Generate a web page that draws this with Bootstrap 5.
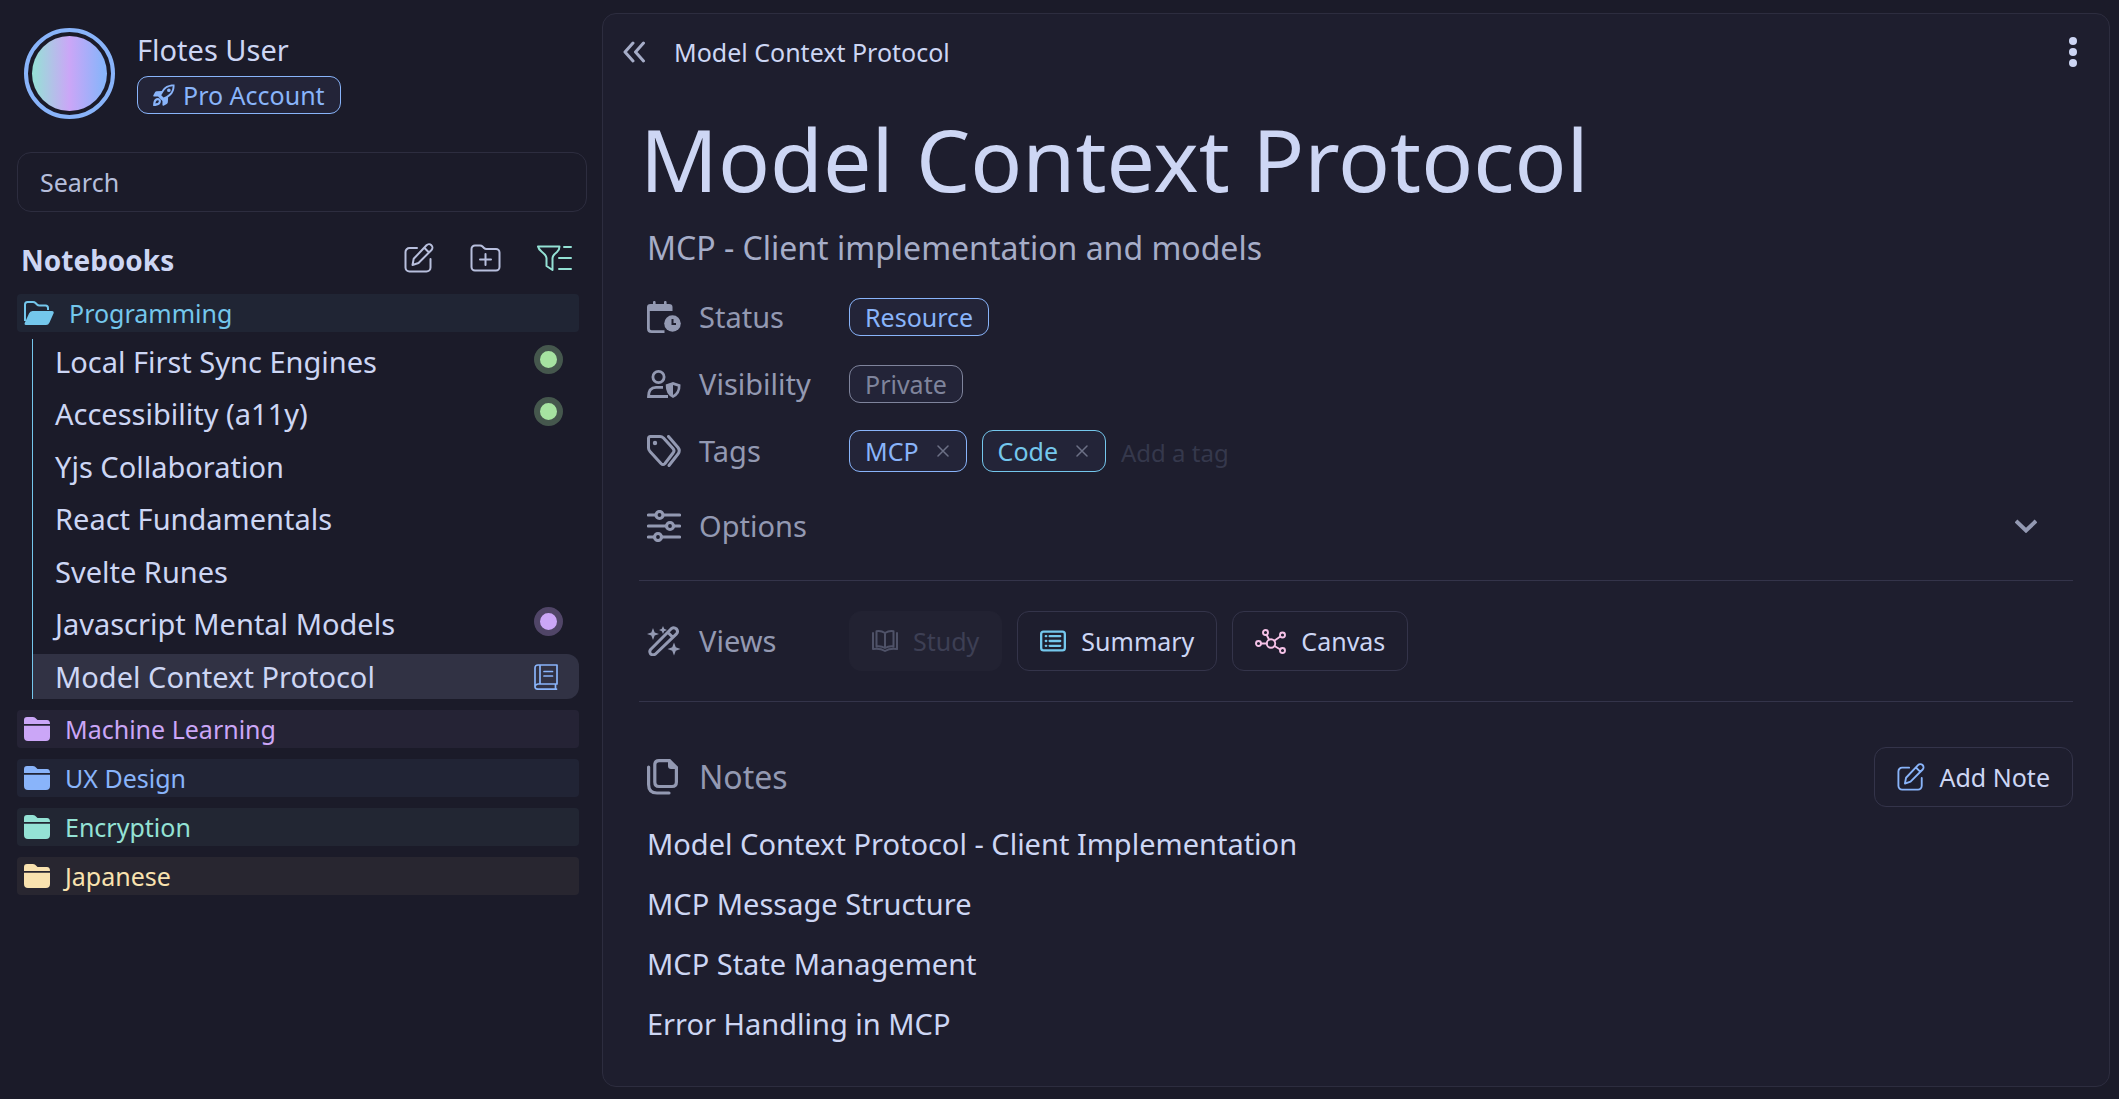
<!DOCTYPE html>
<html lang="en">
<head>
<meta charset="utf-8">
<meta name="viewport" content="width=device-width, initial-scale=1">
<title>Model Context Protocol – Flotes</title>
<link rel="stylesheet" href="https://cdn.jsdelivr.net/npm/bootstrap@5.3.0/dist/css/bootstrap.min.css">
<style>
:root{
  --base:#1e1e2e; --mantle:#1b1b29; --line:#2d2d3f; --rule:#34344a; --ink:#cdd6f4; --sub:#a6adc8; --muted:#9399b2;
  --dim:#6c7086; --blue:#89b4fa; --sapphire:#74c7ec; --teal:#94e2d5; --mauve:#cba6f7; --yellow:#f9e2af;
  --green:#a6e3a1; --pink:#f5c2e7; --chip:#232438;
}
body{background:var(--mantle);color:var(--ink);font-family:"Noto Sans",sans-serif;font-size:25px;line-height:38px}
a{color:inherit;text-decoration:none}
button{font-family:inherit}
svg{display:block;flex:none}
.ico{fill:none;stroke:currentColor;stroke-linecap:round;stroke-linejoin:round}
.bare{background:none;border:0;padding:0;color:inherit;font-size:inherit;line-height:inherit}
.tone-blue{--c:var(--blue)} .tone-sapphire{--c:var(--sapphire)} .tone-teal{--c:var(--teal)}
.tone-mauve{--c:var(--mauve)} .tone-yellow{--c:var(--yellow)} .tone-green{--c:var(--green)}
.tone-pink{--c:var(--pink)} .tone-grey{--c:#7f849c} .tone-faint{--c:#4f5268}
.tinted{color:var(--c)}

.side{flex:0 0 602px;padding:28px 15px 0 17px}
.account{gap:22px;padding-left:7px}
.avatar{width:91px;height:91px;border:4px solid var(--blue);border-radius:50%;padding:4px}
.avatar-fill{height:100%;border-radius:50%;background:linear-gradient(90deg,var(--teal),var(--mauve) 50%,var(--blue) 95%)}
.user-name{font-size:29px;line-height:44px;margin-bottom:4px}
.chip{display:inline-flex;align-items:center;height:38px;padding:0 15px;border:1px solid var(--c);border-radius:11px;background:var(--chip);color:var(--c);font-size:25px;line-height:36px}
.search{height:60px;margin-top:33px;font-size:25px;padding:0 22px;border:1px solid var(--line);border-radius:14px;background:transparent;color:var(--ink)}
.search:focus{background:transparent;color:var(--ink)}
.search::placeholder{color:#b6bedb;opacity:1}
.nb-head{margin:24px 15px 14px 4px}
.nb-title{font-size:28px;line-height:40px;font-weight:700;margin:0}
.nb-tools{gap:36px;color:#b8bfdd}
.nb-list{margin-right:8px}
.folder{display:flex;align-items:center;height:38px;padding-left:7px;border-radius:4px;font-size:25px;gap:15px;color:var(--c);background:color-mix(in srgb,var(--c) 6%,transparent)}
.folder + .folder{margin-top:11px}
.note-tree{margin:7px 0 11px 15px;min-height:360px;border-left:1px solid var(--sapphire);display:flex;flex-direction:column;justify-content:space-between}
.note-link{display:flex;align-items:center;justify-content:space-between;height:45px;padding:0 16px 0 22px;font-size:29px;line-height:44px;border-radius:0 12px 12px 0}
.note-link.current{background:#313244;padding-right:21px}
.dot{width:29px;height:29px;border-radius:50%;border:6px solid color-mix(in srgb,var(--c) 30%,var(--mantle));background:var(--c);margin-bottom:5px}

.pane{background:var(--base);border:1px solid var(--line);border-radius:14px;margin:13px 9px 12px 0;min-height:1074px;padding:19px 36px 0}
.pane-bar{height:38px;margin:0 -4px 0 -17px;gap:28px}
.page-title{font-size:86px;line-height:116px;font-weight:400;margin:30px 0 0 1px}
.page-sub{font-size:32px;line-height:44px;color:var(--sub);margin:9px 0 0 8px}
.props{margin:13px 0 0 8px;color:var(--muted)}
.prop-name{width:202px;gap:18px;font-size:29px;line-height:44px;color:var(--muted);font-weight:400;display:flex;align-items:center;flex:none}
.prop-row{display:flex;align-items:center;height:67px}
.tag-list{gap:15px}
.tag{height:42px}
.tag button{margin-left:18px;margin-right:2px;color:var(--dim)}
.tag-input{width:200px;color:var(--ink);font-size:24px;height:42px;outline:0}
.tag-input::placeholder{color:#35384c;opacity:1}
.options{height:84px;margin-bottom:12px;padding:0 36px 0 8px;color:var(--muted)}
.rule{border:0;border-top:1px solid var(--rule);opacity:1;margin:0}
.views{height:120px;padding-left:8px}
.tool{display:inline-flex;align-items:center;gap:15px;height:60px;padding:0 22px;border:1px solid var(--rule);border-radius:12px;background:transparent;color:var(--ink);font-size:25px;line-height:38px}
.tool:disabled{background:#222232;border-color:#222232;color:#3d3f54}
.notes-bar{padding:45px 0 7px 8px}
.notes-head{font-size:32px;gap:21px;color:var(--muted);line-height:44px;font-weight:400;margin:0}
.note-rows{padding-left:8px}
.note-row{font-size:29px;line-height:60px;display:block}
</style>
</head>
<body>
<svg class="d-none" aria-hidden="true">
  <symbol id="i-edit" viewBox="0 0 30 30"><path d="M13 5H5.500a4 4 0 0 0-4 4v15.500a4 4 0 0 0 4 4h17a4 4 0 0 0 4-4V16"/><path d="M8.500 22l1.200-6.200L22.500 2.300a3.300 3.300 0 0 1 5 4.700L14.500 20z M20.300 4.800l4.700 4.700"/></symbol>
  <symbol id="i-folder" viewBox="0 0 26 24"><path fill="currentColor" d="M0 7V3Q0 0 3 0H9Q11 0 12.500 2L13.500 3H23Q26 3 26 7ZM0 8.800H26V20Q26 24 22 24H4Q0 24 0 20Z"/></symbol>
  <symbol id="i-x" viewBox="0 0 12 12"><path d="M1 1l10 10M11 1L1 11"/></symbol>
</svg>
<div class="d-flex min-vh-100">
  <aside class="side">
    <div class="d-flex align-items-start account">
      <div class="avatar"><div class="avatar-fill"></div></div>
      <div>
        <div class="user-name">Flotes User</div>
        <div class="chip tone-blue gap-2">
          <svg width="22" height="24" viewBox="0 0 24 24" fill="currentColor"><path fill-rule="evenodd" d="M23.500.5C17 .2 12.500 2.500 9.500 7.500L4 7.800Q2.800 8 2.200 9L.3 12.600Q0 13.600 1 13.700H5.500L10.300 18.500V23Q10.500 24 11.500 23.700L15 21.800Q16 21.200 16.200 20L16.500 14.500C21.500 11.500 23.800 7 23.500.500ZM21.500 2.500C21.200 7.500 19 11 14.500 13.300L11.500 14.800L9 12.300L10.700 9.500C13 5 16.500 2.800 21.500 2.500ZM17.300 4.800a2 2 0 1 1 0 4a2 2 0 1 1 0-4Z"/><path fill-rule="evenodd" d="M2 16.500C4 14.800 6.500 15 7.800 16.300S9 20 7.400 22C6 23.500 2.500 24 .2 23.900C0 21.500.5 18 2 16.500ZM3.800 18.300C3 19.200 2.800 20.300 2.800 21.200C3.800 21.200 5 21 5.700 20.300C6.600 19.300 6.400 18.400 6 18S4.600 17.500 3.800 18.300Z"/></svg>
          <span>Pro Account</span>
        </div>
      </div>
    </div>
    <input type="search" class="form-control search shadow-none" placeholder="Search" aria-label="Search">
    <div class="d-flex align-items-center justify-content-between nb-head">
      <h2 class="nb-title pt-1">Notebooks</h2>
      <div class="d-flex align-items-center nb-tools">
        <button class="bare" aria-label="New note"><svg class="ico" width="30" height="30" stroke-width="2"><use href="#i-edit"/></svg></button>
        <button class="bare" aria-label="New notebook"><svg class="ico" width="31" height="28" viewBox="0 0 31 28" stroke-width="2"><path d="M1.500 5A3.500 3.500 0 0 1 5 1.500H10Q11.500 1.500 12.500 2.500L14 4Q15 5 16.500 5H26A3.500 3.500 0 0 1 29.500 8.500V23A3.500 3.500 0 0 1 26 26.500H5A3.500 3.500 0 0 1 1.500 23ZM15.500 10v11M10 15.500h11"/></svg></button>
        <button class="bare tinted tone-teal" aria-label="Filter"><svg class="ico" width="35" height="26" viewBox="0 0 35 26" stroke-width="2"><path d="M1 1.500H22.500Q22.500 5 20 7Q15.500 10.500 15.500 13V25L9.500 21V13Q9.500 10.500 4.500 6.500Q1.500 4 1 1.500ZM27 2h7M22 13h12M22 24h12"/></svg></button>
      </div>
    </div>
    <nav class="nb-list">
      <a href="#" class="folder tone-sapphire">
        <svg width="30" height="26" viewBox="0 0 30 24"><path fill="none" stroke="currentColor" stroke-width="2" d="M1 20V3.500Q1 1 3.500 1H9Q10.500 1 11.500 2L13 3.500Q14 4.500 15.500 4.500H21.500Q24 4.500 24 7V9"/><path fill="currentColor" d="M8.500 10H27.500Q30.500 10 29.500 12.500L25.500 21.500Q24.500 24 22 24H2Q0 24 .8 21.800L5 12.500Q6 10 8.500 10Z"/></svg>
        <span>Programming</span></a>
      <div class="note-tree">
        <a href="#" class="note-link">Local First Sync Engines<i class="dot tone-green"></i></a>
        <a href="#" class="note-link">Accessibility (a11y)<i class="dot tone-green"></i></a>
        <a href="#" class="note-link">Yjs Collaboration</a>
        <a href="#" class="note-link">React Fundamentals</a>
        <a href="#" class="note-link">Svelte Runes</a>
        <a href="#" class="note-link">Javascript Mental Models<i class="dot tone-mauve"></i></a>
        <a href="#" class="note-link current" aria-current="page">Model Context Protocol<svg class="ico tinted tone-blue" width="24" height="26" viewBox="0 0 24 26" stroke-width="1.700"><path d="M4 1H23V20H4Q1 20.500 1 22.700T4 25.200H22.500M1 22.500V4Q1 1 4 1M6 1V20M10 7.500h8.500M10 12h8.500M21.500 20v5"/></svg></a>
      </div>
      <a href="#" class="folder tone-mauve"><svg width="26" height="24"><use href="#i-folder"/></svg><span>Machine Learning</span></a>
      <a href="#" class="folder tone-blue"><svg width="26" height="24"><use href="#i-folder"/></svg><span>UX Design</span></a>
      <a href="#" class="folder tone-teal"><svg width="26" height="24"><use href="#i-folder"/></svg><span>Encryption</span></a>
      <a href="#" class="folder tone-yellow"><svg width="26" height="24"><use href="#i-folder"/></svg><span>Japanese</span></a>
    </nav>
  </aside>

  <main class="pane flex-grow-1">
    <div class="d-flex align-items-center pane-bar">
      <button class="bare" aria-label="Collapse sidebar"><svg class="ico" width="24" height="22" viewBox="0 0 24 22" stroke-width="3" color="#a6adc8"><path d="M11 2L3 11l8 9M21.500 2l-8 9 8 9"/></svg></button>
      <span class="flex-grow-1">Model Context Protocol</span>
      <button class="bare" aria-label="More"><svg width="8" height="30" viewBox="0 0 8 30" fill="currentColor"><circle cx="4" cy="4" r="4"/><circle cx="4" cy="15" r="4"/><circle cx="4" cy="26" r="4"/></svg></button>
    </div>
    <h1 class="page-title">Model Context Protocol</h1>
    <p class="page-sub">MCP - Client implementation and models</p>
    <dl class="props mb-0">
      <div class="prop-row">
        <dt class="prop-name"><svg width="34" height="32" viewBox="0 0 34 32"><path fill="currentColor" d="M0 10V6Q0 3 3.500 3H6V1.200a1.200 1.200 0 0 1 2.600 0V3H17V1.200a1.200 1.200 0 0 1 2.600 0V3H22Q25.500 3 25.500 6V10Z"/><path fill="none" stroke="currentColor" stroke-width="2.800" d="M1.400 9V27.500Q1.400 30.600 4.500 30.600H17.500"/><circle cx="25.500" cy="22.500" r="8.300" fill="currentColor"/><path fill="none" stroke="var(--base)" stroke-width="2" d="M25.500 18V23H29"/></svg>Status</dt>
        <dd class="mb-0"><span class="chip tone-blue">Resource</span></dd>
      </div>
      <div class="prop-row">
        <dt class="prop-name"><svg width="34" height="28" viewBox="0 0 34 28"><g fill="none" stroke="currentColor" stroke-width="2.800"><circle cx="11.500" cy="7" r="5.600"/><path d="M21 26.500H1.500Q1.500 17.500 9 17.300H16"/></g><path fill="currentColor" d="M26 12L33.500 14.500Q34 24.500 26 28Q18.500 24.500 18.700 14.500Z"/><path fill="var(--base)" d="M26 15V25Q31 22 30.800 16.500Z"/></svg>Visibility</dt>
        <dd class="mb-0"><span class="chip tone-grey">Private</span></dd>
      </div>
      <div class="prop-row">
        <dt class="prop-name"><svg class="ico" width="34" height="32" viewBox="0 0 34 32" stroke-width="3"><path d="M1.500 13V3.500Q1.500 1.500 3.500 1.500H13Q15 1.500 16.500 3L26 13.500Q28 15.800 26 18L18 28.500Q16 30.500 14 28.500L3 16.500Q1.500 15 1.500 13ZM21.500 1.500L31 12.500Q33.500 15.800 31 19L22 30.500"/><circle cx="8" cy="8" r="1.200" fill="currentColor" stroke-width="2"/></svg><label for="tag">Tags</label></dt>
        <dd class="mb-0 d-flex align-items-center tag-list">
          <span class="chip tag tone-blue">MCP<button class="bare" aria-label="Remove MCP"><svg class="ico" width="12" height="12" stroke-width="1.500"><use href="#i-x"/></svg></button></span>
          <span class="chip tag tone-sapphire">Code<button class="bare" aria-label="Remove Code"><svg class="ico" width="12" height="12" stroke-width="1.500"><use href="#i-x"/></svg></button></span>
          <input id="tag" class="bare tag-input pt-1" placeholder="Add a tag">
        </dd>
      </div>
    </dl>
    <button class="bare w-100 d-flex align-items-center justify-content-between options" aria-expanded="false">
      <span class="prop-name"><svg class="ico" width="34" height="32" viewBox="0 0 34 32" stroke-width="3.200"><path d="M1.500 5h7M16.500 5h16M1.500 16h17M27 16h5.500M1.500 27h5M15 27h17.500"/><circle cx="12.500" cy="5" r="3.500"/><circle cx="23" cy="16" r="3.500"/><circle cx="11" cy="27" r="3.500"/></svg>Options</span>
      <svg class="ico" width="22" height="14" viewBox="0 0 22 14" stroke-width="4"><path stroke-linecap="butt" stroke-linejoin="miter" d="M1 2l10 9.500L21 2"/></svg>
    </button>
    <hr class="rule">
    <div class="d-flex align-items-center views">
      <div class="prop-name"><svg class="ico" width="34" height="30" viewBox="0 0 34 30" stroke-width="3"><path d="M3.600 23.500L24.500 2.500Q27 .8 29.500 3Q31.500 5.500 29.500 7.800L8.500 28Q6 29.500 3.600 28Q2 25.500 3.600 23.500ZM21 6.500l4.500 4.500"/><path fill="currentColor" stroke="none" d="M6 2l1.700 4.500L12 8l-4.300 1.500L6 14 4.300 9.500 0 8l4.300-1.500zM16 0l1.200 2.800L20 4l-2.800 1.200L16 8l-1.200-2.800L12 4l2.800-1.200zM27 16.500l1.800 4.700L33.500 23l-4.700 1.800L27 29.500l-1.800-4.700L20.500 23l4.700-1.800z"/></svg>Views</div>
      <div class="d-flex tag-list">
        <button class="tool" disabled><svg class="ico tinted tone-faint" width="26" height="22" viewBox="0 0 26 22" stroke-width="2"><path d="M13 3Q9 .5 4.500 1.300V16.500Q9 15.700 13 18Q17 15.700 21.500 16.500V1.300Q17 .5 13 3ZM13 3V18M1 3V19Q8 18 13 21Q18 18 25 19V3"/></svg>Study</button>
        <button class="tool"><svg class="ico tinted tone-sapphire" width="26" height="22" viewBox="0 0 27 22" stroke-width="2.400"><rect x="1.200" y="1.200" width="24.600" height="19.600" rx="2.500"/><path d="M6 6h.5M6 11h.5M6 16h.5M10 6h11M10 11h11M10 16h11"/></svg>Summary</button>
        <button class="tool"><svg class="ico tinted tone-pink" width="31" height="25" viewBox="0 0 31 25" stroke-width="1.900"><circle cx="16" cy="14.500" r="4.200"/><circle cx="10.500" cy="3.500" r="2.500"/><circle cx="27.500" cy="6" r="2.500"/><circle cx="3.500" cy="14.500" r="2.500"/><circle cx="27.500" cy="21.500" r="2.500"/><path d="M11.700 6L14 10.500M25.300 7.500L19.300 11.800M6 14.500h5.700M19.500 17l5.800 3.500"/></svg>Canvas</button>
      </div>
    </div>
    <hr class="rule">
    <section>
      <div class="d-flex align-items-center justify-content-between notes-bar">
        <h2 class="d-flex align-items-center notes-head"><svg width="31" height="36" viewBox="0 0 31 36" fill="none" stroke="currentColor" stroke-width="3.200" stroke-linecap="round"><path d="M1.600 8V25.500Q1.600 34 10 34H22"/><path d="M12 1.600H22.500L29.400 8.500V23Q29.400 27.500 25 27.500H12Q7.800 27.500 7.800 23V6Q7.800 1.600 12 1.600Z"/><path fill="currentColor" stroke="none" d="M21 1L30 10H24Q21 10 21 7Z"/></svg>Notes</h2>
        <button class="tool"><svg class="ico tinted tone-blue" width="28" height="28" stroke-width="2"><use href="#i-edit"/></svg>Add Note</button>
      </div>
      <div class="note-rows">
        <a href="#" class="note-row">Model Context Protocol - Client Implementation</a>
        <a href="#" class="note-row">MCP Message Structure</a>
        <a href="#" class="note-row">MCP State Management</a>
        <a href="#" class="note-row">Error Handling in MCP</a>
      </div>
    </section>
  </main>
</div>
<script src="https://cdn.jsdelivr.net/npm/bootstrap@5.3.0/dist/js/bootstrap.bundle.min.js"></script>
</body>
</html>
